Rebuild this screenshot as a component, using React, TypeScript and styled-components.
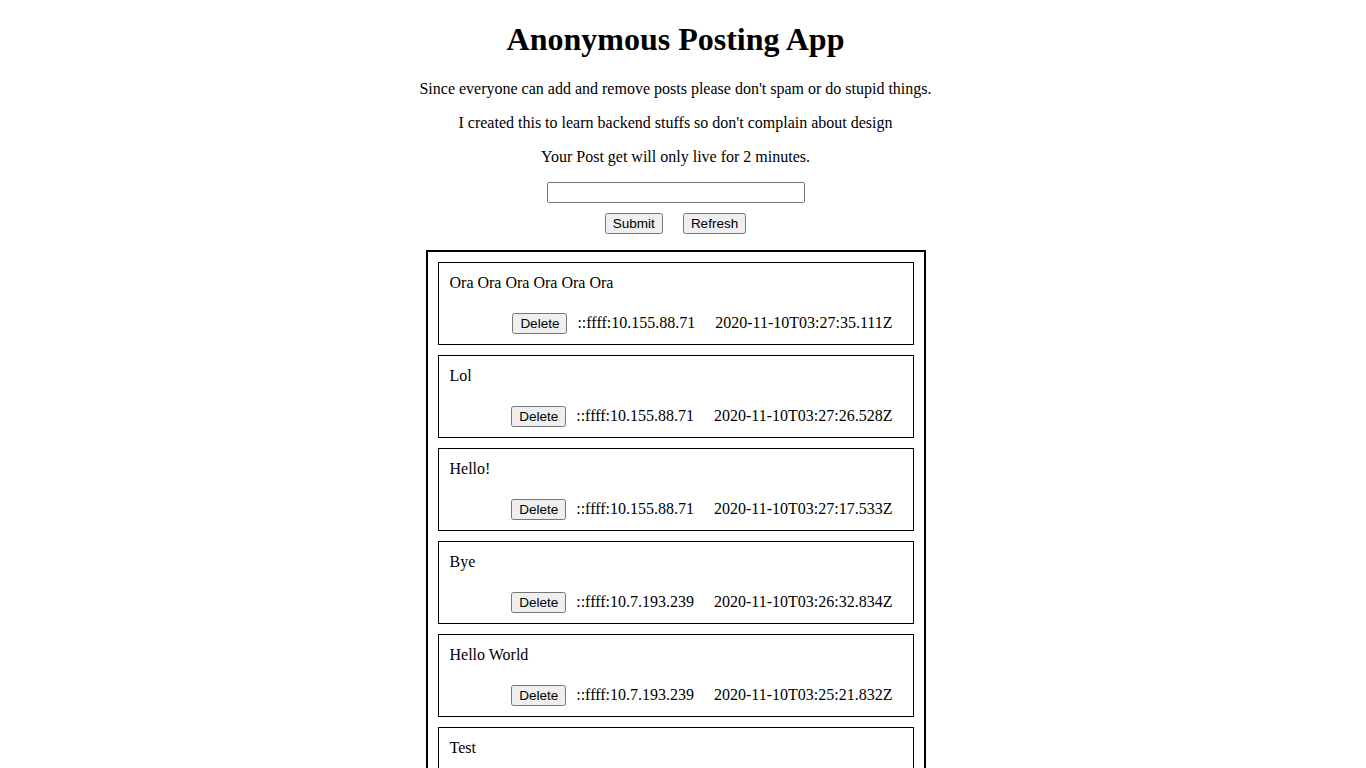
import React from "react";
import styled, { createGlobalStyle } from "styled-components";

const Global = createGlobalStyle`
  html {
    background: #ffffff;
  }
  body {
    margin: 8px 23px 8px 8px;
    font-family: "Liberation Serif", "Times New Roman", serif;
    font-size: 16px;
    color: #000000;
  }
`;

const Page = styled.main`
  display: flex;
  flex-direction: column;
  align-items: center;
  text-align: center;
`;

const Title = styled.h1`
  font-size: 32px;
  font-weight: bold;
  margin: 13.44px 0 21.44px;
  line-height: normal;
`;

const Note = styled.p`
  margin: 0 0 16px;
  font-size: 16px;
  line-height: normal;
`;

const Form = styled.form`
  display: flex;
  flex-direction: column;
  align-items: center;
`;

const TextInput = styled.input`
  width: 250px;
  font-family: "Liberation Sans", Arial, sans-serif;
  font-size: 13.333px;
`;

const ButtonRow = styled.div`
  display: flex;
  gap: 20px;
  margin-top: 10px;
`;

const NativeButton = styled.button`
  font-family: "Liberation Sans", Arial, sans-serif;
  font-size: 13.5px;
`;

const PostList = styled.section`
  width: 476px;
  margin-top: 16px;
  padding: 10px;
  border: 2px solid #000000;
  display: flex;
  flex-direction: column;
  gap: 10px;
`;

const Card = styled.article`
  border: 1px solid #000000;
  padding: 11px 10px 10px 11px;
  text-align: left;
  display: flex;
  flex-direction: column;
`;

const PostText = styled.div`
  line-height: normal;
  min-height: 18px;
`;

const Meta = styled.div`
  display: flex;
  justify-content: flex-end;
  align-items: center;
  margin-top: 21px;
  padding-right: 10px;
`;

const MetaText = styled.span<{ $gap: number }>`
  margin-left: ${(p) => p.$gap}px;
  line-height: normal;
`;

type Post = { text: string; ip: string; time: string };

const posts: Post[] = [
  { text: "Ora Ora Ora Ora Ora Ora", ip: "::ffff:10.155.88.71", time: "2020-11-10T03:27:35.111Z" },
  { text: "Lol", ip: "::ffff:10.155.88.71", time: "2020-11-10T03:27:26.528Z" },
  { text: "Hello!", ip: "::ffff:10.155.88.71", time: "2020-11-10T03:27:17.533Z" },
  { text: "Bye", ip: "::ffff:10.7.193.239", time: "2020-11-10T03:26:32.834Z" },
  { text: "Hello World", ip: "::ffff:10.7.193.239", time: "2020-11-10T03:25:21.832Z" },
  { text: "Test", ip: "::ffff:10.7.193.239", time: "2020-11-10T03:25:02.410Z" },
];

export default function App() {
  return (
    <>
      <Global />
      <Page>
        <Title>Anonymous Posting App</Title>
        <Note>Since everyone can add and remove posts please don't spam or do stupid things.</Note>
        <Note>I created this to learn backend stuffs so don't complain about design</Note>
        <Note>Your Post get will only live for 2 minutes.</Note>
        <Form onSubmit={(e) => e.preventDefault()}>
          <TextInput type="text" />
          <ButtonRow>
            <NativeButton type="submit">Submit</NativeButton>
            <NativeButton type="button">Refresh</NativeButton>
          </ButtonRow>
        </Form>
        <PostList>
          {posts.map((p, i) => (
            <Card key={i}>
              <PostText>{p.text}</PostText>
              <Meta>
                <NativeButton type="button">Delete</NativeButton>
                <MetaText $gap={10}>{p.ip}</MetaText>
                <MetaText $gap={20}>{p.time}</MetaText>
              </Meta>
            </Card>
          ))}
        </PostList>
      </Page>
    </>
  );
}
